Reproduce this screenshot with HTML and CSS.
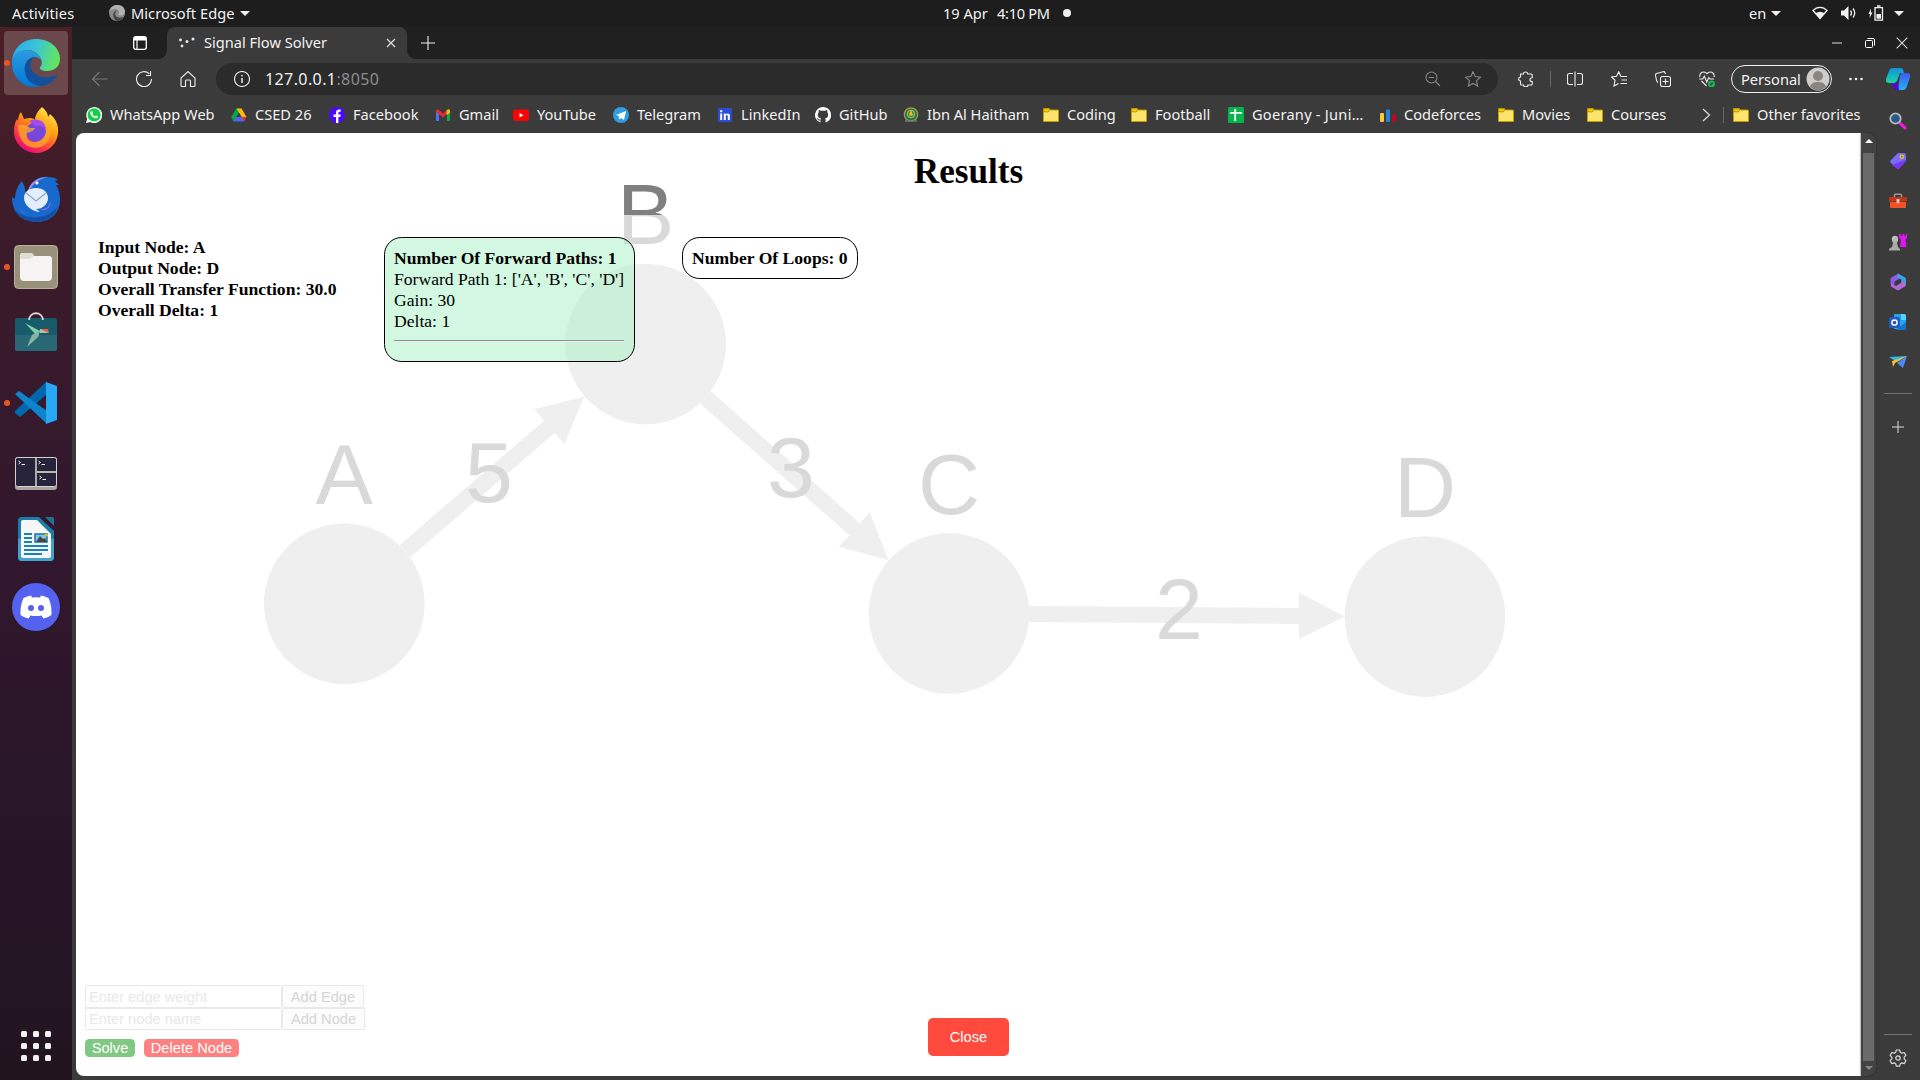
FILE: index.html
```html
<!DOCTYPE html>
<html lang="en">
<head>
<meta charset="utf-8">
<title>Signal Flow Solver</title>
<link rel="stylesheet" href="styles.css">
</head>
<body>
<header class="topbar">
  <span class="activities">Activities</span>
  <svg class="mini-edge" width="16" height="16" viewBox="0 0 48 48"><circle cx="24" cy="24" r="24" fill="#8a8a8a"/><path d="M0 24C2 8 14 0 26 0c14 0 22 10 22 20 0 8-8 13-17 11-4-1-3-4-1-6 2-8-5-13-13-13C8 12 2 18 0 24z" fill="#b0b0b0"/><path d="M13 34c-2-12 6-18 12-16-8 2-9 12-2 17 6 4 14 4 21 0-4 8-12 13-20 13-6-2-10-7-11-14z" fill="#444"/></svg>
  <span class="appname">Microsoft Edge</span>
  <i class="caret"></i>
  <span class="date">19 Apr</span><span class="time">4:10 PM</span><i class="notif"></i>
  <span class="lang">en</span><i class="caret"></i>
  <svg class="wifi" width="16" height="14" viewBox="0 0 16 14"><path d="M1 4.5C5 .2 11 .2 15 4.5L8 12.5z" fill="none" stroke="#f2f2f2" stroke-width="1.3"/><path d="M3.5 7.3c3-2 6-2 9 0L8 12.8z" fill="#f2f2f2"/></svg>
  <svg class="volume" width="16" height="14" viewBox="0 0 16 14"><path d="M0 4.5h3L7.5 0v14L3 9.500H0z" fill="#f2f2f2"/><path d="M9.500 4.500q2 2.500 0 5M12 2.500q3.500 4.500 0 9" fill="none" stroke="#f2f2f2" stroke-width="1.300"/></svg>
  <svg class="battery" width="16" height="16" viewBox="0 0 16 16"><path d="M3 3.500L.5 9H2l-.5 4L4.500 7.500H3z" fill="#f2f2f2"/><path d="M7 2.700h7.500v12.500H7zM9 1h3.500" fill="none" stroke="#f2f2f2" stroke-width="1.300"/><path d="M8.500 9h4.500v4.700H8.500z" fill="#f2f2f2"/></svg>
  <i class="caret sys-caret"></i>
</header>
<div class="desktop">
<nav class="dock">
  <div class="app active running"><svg viewBox="0 0 48 48"><defs><linearGradient id="eg" x1="0" x2="1" y1=".1" y2=".3"><stop offset="0" stop-color="#27a9e8"/><stop offset=".5" stop-color="#3ac4d8"/><stop offset="1" stop-color="#62e560"/></linearGradient><linearGradient id="eb" x1="0" x2="0" y1="0" y2="1"><stop offset="0" stop-color="#2b9ce0"/><stop offset="1" stop-color="#0078d7"/></linearGradient></defs><path d="M0 22C1 9 11 0 24 0c14 0 24 9 24 20 0 8-6 12-13 12-5 0-8-2-7-4 3-2 2-8-1-11C20 7 4 10 0 22z" fill="url(#eg)"/><path d="M0 24c0-8 6-13 14-13 9 0 15 5 16 12-1-3-4-5-7-5-7 0-11 6-9 13 1 8 7 15 15 16C12 51 0 39 0 24z" fill="url(#eb)"/><path d="M13 33c-2-8 3-14 10-15-5 3-6 10-2 15 5 6 14 7 23 3 2-1 1 1 0 2-4 6-10 9-16 9-8-1-14-6-15-14z" fill="#12509c"/></svg></div>
  <div class="app"><svg viewBox="0 0 48 48"><defs><linearGradient id="ff" x1=".8" x2=".2" y1="0" y2="1"><stop offset="0" stop-color="#fff04a"/><stop offset=".4" stop-color="#ff980e"/><stop offset=".7" stop-color="#ff3b45"/><stop offset="1" stop-color="#e2007f"/></linearGradient></defs><path d="M30 0c4 3 6 7 6 10l2-3c6 5 9 12 8 19C45 38 35 46 24 46S2 37 2 25c0-6 1-10 3-13l1 2c0-3 1-7 3-9l3 7 5-1c2 0 4 0 6 2 0-5 3-9 7-13z" fill="url(#ff)"/><circle cx="24" cy="25" r="10" fill="#7747dc"/><path d="M17 14c8-4 17 0 17 8-3-3-6-4-10-3z" fill="#a54ce8"/><path d="M6 18c6-1 8 0 12 3l5 0c-1 3-5 4-8 5-2 8 6 11 12 8 5-2 8-8 7-14l-5-8c8 4 12 13 8 21-5 9-17 10-24 4C8 33 6 26 6 18z" fill="#ffad25" opacity=".75"/></svg></div>
  <div class="app"><svg viewBox="0 0 48 48"><path d="M17 14C20 5 28 1 36 2c4 0 8 1 10 3l-3 1 4 4-3 0c3 4 4 10 4 15 0 13-10 22-23 22C10 47 0 38 0 22l3 2C3 17 6 10 10 6c2 4 4 8 3 12z" fill="#1869cd"/><path d="M3 35c9 9 31 12 43-4-3 10-11 16-21 16-10 0-18-5-22-12z" fill="#1350a5"/><path d="M16 16c2-9 10-14 20-14-9 2-14 6-19 14z" fill="#9a8cf0"/><circle cx="25" cy="8" r="1.500" fill="#fff"/><path d="M6 20c-2 8 2 16 10 21-7-3-12-12-10-21zm24 14c5 0 7-3 9-8 0 6-4 10-10 9z" fill="#7773e2"/><path d="M12 23c0-6 5-10 12-10s12 4 12 10-5 11-12 11l4 3c-9-1-16-7-16-14z" fill="#e4eefa"/><path d="M14 18l10 8 10-8" fill="none" stroke="#8ea8c8" stroke-width="1.300"/></svg></div>
  <div class="app running"><svg viewBox="0 0 48 48"><rect x="2.500" y="2.500" width="43" height="43" rx="4" fill="#999179" stroke="#b9b09a"/><path d="M8 13q0-3 3-3h8q2 0 3 3h15q3 0 3 3v18q0 4-4 4H12q-4 0-4-4z" fill="#f6f5f3"/><path d="M8 13q0-3 3-3h8q2 0 3 3l-4 3H8z" fill="#e0ddd4"/></svg></div>
  <div class="app"><svg viewBox="0 0 48 48"><rect x="3" y="7" width="42" height="33" rx="2.500" fill="#175b6a"/><path d="M3 24h42v14q0 2-2 2H5q-2 0-2-2z" fill="#276776"/><path d="M13 12l15 8-2 6z" fill="#83ceb0"/><path d="M28 19L26 26 15 36l5-12z" fill="#82b6a0"/><path d="M17 9c1-9 13-9 14 0" fill="none" stroke="#ddd4dd" stroke-width="1.800"/><path d="M28 18l7 0 1 4-8 0z" fill="#a6c8b3"/><path d="M29 18h7l1 4-5-2zM34 19l3 3-1 0z" fill="#f15c3c"/></svg></div>
  <div class="app running"><svg viewBox="0 0 48 48"><path d="M34 3v13L8 38l-5-4v-2z" fill="#0068ae"/><path d="M3 15l4-3 28 20v13z" fill="#0c85ce"/><path d="M34 3l11 4v34l-11 4z" fill="#27a8f2"/></svg></div>
  <div class="app"><svg viewBox="0 0 48 48"><rect x="3" y="10" width="42" height="33" rx="3" fill="#a7a49f"/><rect x="3.500" y="10.500" width="41" height="29" rx="2" fill="#26233a" stroke="#d4d2cc"/><path d="M24 11v28M24 25h20" stroke="#b9b7b2" stroke-width="1.800"/><path d="M6.500 14l2 1.500-2 1.500m3 .5h3.500M26.500 14l2 1.500-2 1.500m3 .5H33M27.500 29l2 1.500-2 1.500m3 .5H34" fill="none" stroke="#eee"/></svg></div>
  <div class="app"><svg viewBox="0 0 48 48"><path d="M10 2h17l15 14v26q0 4-4 4H10q-4 0-4-4V6q0-4 4-4z" fill="#1b7ca8"/><path d="M6 24h36v18q0 4-4 4H10q-4 0-4-4z" fill="#42a2cc"/><path d="M11 5h14l14 14v22q0 2-2 2H11q-2 0-2-2V7q0-2 2-2z" fill="#f6f6f6"/><path d="M33 2h7q2 0 2 2v7z" fill="#226f94"/><path d="M12 19h8m-8 4h8m-8 4h8m-8 4h24m-24 4h24m-24 4h18" stroke="#1782ba" stroke-width="2"/><path d="M23 19h12v8H23z" fill="#83c4e4" stroke="#1574a6" stroke-width="1.500"/><path d="M24 27l4-6 3 3 2-1 2 4z" fill="#444"/><path d="M32 19h4v3z" fill="#f3b70f"/></svg></div>
  <div class="app"><svg viewBox="0 0 48 48"><circle cx="24" cy="24" r="24" fill="#5562ef"/><path d="M19 12.500l1 2q4-.7 8 0l1-2q4 .5 7.500 2.500 3.500 7.500 3 17-4 3-8 3.500l-2-3q-5.500 1.200-11 0l-2 3q-4-.5-8-3.500-.5-9.500 3-17 3.500-2 7.500-2.500z" fill="#fff"/><circle cx="19" cy="25" r="3" fill="#5562ef"/><circle cx="29" cy="25" r="3" fill="#5562ef"/></svg></div>
  <div class="apps-grid"><i></i><i></i><i></i><i></i><i></i><i></i><i></i><i></i><i></i></div>
</nav>
<main class="browser">
  <div class="tabstrip">
    <svg class="tab-actions" width="14" height="14" viewBox="0 0 14 14"><rect x=".7" y=".7" width="12.600" height="12.600" rx="2" fill="none" stroke="#fff" stroke-width="1.300"/><path d="M1 1h12v3.500H1z" fill="#fff"/><path d="M4 4v9" stroke="#fff" stroke-width="1.200"/></svg>
    <div class="tab">
      <svg width="18" height="12" viewBox="0 0 18 12"><g fill="#e8e8e8"><circle cx="2.500" cy="3" r="1.400"/><circle cx="4" cy="9" r="1.400"/><circle cx="9" cy="4.500" r="1.500"/><circle cx="15" cy="2" r="1.500"/></g></svg>
      <span class="tab-title">Signal Flow Solver</span>
      <svg class="tab-close" width="10" height="10" viewBox="0 0 10 10"><path d="M1 1l8 8M9 1L1 9" stroke="#ddd" stroke-width="1.200"/></svg>
    </div>
    <svg class="newtab" width="14" height="14" viewBox="0 0 14 14"><path d="M7 0v14M0 7h14" stroke="#eee" stroke-width="1.100"/></svg>
    <div class="winctl">
      <svg width="12" height="12" viewBox="0 0 12 12"><path d="M1 6h10" stroke="#8b8b8b" stroke-width="1.800"/></svg>
      <svg width="12" height="12" viewBox="0 0 12 12"><rect x="1.500" y="3.500" width="7" height="7" rx="1" fill="none" stroke="#fff"/><path d="M3.500 1.500H9q1.500 0 1.500 1.500v5.500" fill="none" stroke="#fff"/></svg>
      <svg width="12" height="12" viewBox="0 0 12 12"><path d="M.7.7l10.600 10.600M11.300.7L.7 11.300" stroke="#ddd" stroke-width="1.100"/></svg>
    </div>
  </div>
  <div class="toolbar">
    <div class="tb"><svg viewBox="0 0 16 16"><path d="M15.500 8H.8M7.500 1L.6 8l6.900 7" stroke="#777"/></svg></div>
    <div class="tb"><svg viewBox="0 0 16 16"><path d="M13.300 2.800A7.500 7.500 0 1 0 15.500 8M14.500 0v4.500H10"/></svg></div>
    <div class="tb"><svg viewBox="0 0 16 16"><path d="M1 7l7-6.400L15 7v7.500q0 1-1 1h-3.500V10q0-1-1-1h-3q-1 0-1 1v5.500H2q-1 0-1-1z"/></svg></div>
    <div class="address">
      <svg class="ic" viewBox="0 0 16 16"><circle cx="8" cy="8" r="7.500"/><path d="M8 7v5" stroke-width="1.500"/><circle cx="8" cy="4.700" r=".9" fill="#ddd" stroke="none"/></svg>
      <span class="url">127.0.0.1<b>:8050</b></span>
      <svg class="ic dim zoomout" viewBox="0 0 16 16"><circle cx="6.500" cy="6.500" r="5.500"/><path d="M10.500 10.500L15 15M4 6.500h5"/></svg>
      <svg class="ic dim" viewBox="0 0 16 16"><path d="M8 .8l2.200 4.800 5.200.6-3.900 3.500 1.100 5.400L8 12.500l-4.600 2.600 1.100-5.400L.6 6.200l5.200-.6z"/></svg>
    </div>
    <div class="tb puzzle"><svg viewBox="0 0 16 16"><path d="M2.500 3H5.500C5.500 .3 9.700 .3 9.700 3h3.500q1 0 1 1v2.700c-3 0-3 3.900 0 3.900V13q0 1-1 1H10c0 2.500-4.500 2.500-4.500 0H3.500q-1 0-1-1v-3C0 10 0 6 2.500 6z"/></svg></div>
    <i class="vsep"></i>
    <div class="tb"><svg viewBox="0 0 16 16"><path d="M8 .5v15M6 2.500H2.500q-2 0-2 2v7q0 2 2 2H6M10 2.500h3.500q2 0 2 2v7q0 2-2 2H10"/></svg></div>
    <div class="tb"><svg viewBox="0 0 16 16"><path d="M9.500 5.500L9.800 5.300 7.800.8 5.500 5.200.5 6l3.500 3.300-1 5.700 4.500-2.500M9.500 5.500h6.500M10.500 9H16M9.500 12.500H16"/></svg></div>
    <div class="tb"><svg viewBox="0 0 16 16"><rect x="5.500" y="5.500" width="10" height="10" rx="2"/><path d="M10.500 7.500v6M7.500 10.500h6M3 11.500Q2 11 1.500 9L.5 4.500Q.3 3 1.700 2.500L8 .7q1.500-.3 2 1L10.500 3"/></svg></div>
    <div class="tb"><svg viewBox="0 0 16 16"><path d="M.8 6C0 1.500 5.500-.8 8 2.800 10.500-.8 16 1.500 15.200 6M2.500 10l5 5M.3 8h3.500l1.500-3 2.500 6 2-4.500 1.200 1.500H15"/><circle cx="12.500" cy="13" r="3.500" fill="#16b84e" stroke="none"/><path d="M11.300 14l2.400-2.200" stroke="#222"/></svg></div>
    <div class="profile"><span>Personal</span><svg width="24" height="24" viewBox="0 0 24 24"><circle cx="12" cy="12" r="11.500" fill="#d0ccc9"/><circle cx="12" cy="9" r="5" fill="#8a8582"/><path d="M4 20q1-5 8-5t8 5q-8 7-16 0z" fill="#8a8582"/></svg></div>
    <div class="tb menu"><svg viewBox="0 0 16 16"><g fill="#eee" stroke="none"><circle cx="2.500" cy="8" r="1.300"/><circle cx="8" cy="8" r="1.300"/><circle cx="13.500" cy="8" r="1.300"/></g></svg></div>
    <svg class="copilot" width="24" height="24" viewBox="0 0 24 24"><defs><linearGradient id="c1" x1="0" x2="0" y1="0" y2="1"><stop offset="0" stop-color="#1391dc"/><stop offset="1" stop-color="#18d5a5"/></linearGradient><linearGradient id="c2" x1="0" x2="0" y1="0" y2="1"><stop offset="0" stop-color="#4058ef"/><stop offset="1" stop-color="#22b3f5"/></linearGradient></defs><path d="M6 1h9q2 0 2.500 3l.5 2h-4L11 14q-1 2-3 2H3Q-1 16 0 12L3 4q1-3 3-3z" fill="url(#c1)"/><path d="M15 6h6q4 0 3 4l-3 9q-1 4-4 4h-5l2-14z" fill="url(#c2)"/><path d="M11 14l2 9h-3q-2 0-3-4l-1-3h3q1 0 2-2z" fill="#5008d8"/></svg>
  </div>
  <div class="bookmarks">
    <a><svg viewBox="0 0 16 16"><path d="M0 16l1.200-4.200A8 8 0 1 1 4.300 15z" fill="#fff"/><circle cx="8.100" cy="7.900" r="6.600" fill="#12cf48"/><path d="M5 4.200q1-.8 1.600.7l.4 1q0 .5-.7 1.100 1 1.900 2.800 2.500l.9-1q.3-.3 1.900.8.300 2-2 2-4-.5-5.600-4.500Q4.200 5 5 4.200z" fill="#fff"/></svg><span>WhatsApp Web</span></a>
    <a><svg viewBox="0 0 16 16"><path d="M5.300 1.500h5L5 10.500l-2.600 4L.3 10z" fill="#00a84b"/><path d="M5.500 1.500h5l5 8.500h-5z" fill="#ffb900"/><path d="M5 10h10.300l-2.500 4.500H2.400z" fill="#4b66f5"/><path d="M11 10h4.500l-2.600 4.500z" fill="#f02f2d"/><path d="M8 6l2.500 4H5.500z" fill="#3b3b3b"/></svg><span>CSED 26</span></a>
    <a><svg viewBox="0 0 16 16"><circle cx="8" cy="8" r="8" fill="#4a08ff"/><path d="M7 16v-6H4.500V7.500H7V5.700Q7 2.500 10.200 2.500h1.500v2.300h-1.300q-1 0-1 1v1.700h2.300L11.300 10H9.400v6z" fill="#fff"/></svg><span>Facebook</span></a>
    <a><svg viewBox="0 0 16 16"><path d="M1 4h3v10H2q-1 0-1-1z" fill="#4c72f5"/><path d="M12 4h3v9q0 1-1 1h-2z" fill="#14a84c"/><path d="M1 3.500q2-2 3.500 0L8 6.500l3.500-3V7.500L8 10.300 1 5z" fill="#e52a34"/><path d="M11.500 3.500q2.500-2.500 3.500 0V6l-3.500 2z" fill="#fabc08"/></svg><span>Gmail</span></a>
    <a><svg viewBox="0 0 16 16"><rect y="2.500" width="16" height="11.500" rx="3" fill="#f00"/><path d="M6.500 6v4.500l4-2.250z" fill="#fff"/></svg><span>YouTube</span></a>
    <a><svg viewBox="0 0 16 16"><circle cx="8" cy="8" r="8" fill="#2d9fe2"/><path d="M3 8l10-4-2 9-3-2-2 1.500L5.800 9z" fill="#fff"/></svg><span>Telegram</span></a>
    <a><svg viewBox="0 0 16 16"><rect x="1" y="1" width="14" height="14" rx="1" fill="#2d4dd1"/><path d="M3.200 6.500h2V13h-2zM3.200 3.200h2v2h-2zM6.800 6.500h1.900v1q2.500-2.300 4.100.3V13h-2V9q-1-2-2 0v4h-2z" fill="#fff"/></svg><span>LinkedIn</span></a>
    <a><svg viewBox="0 0 16 16"><path d="M8 0a8 8 0 0 0-2.500 15.600V13.500Q3 14 2.500 12.200L1.500 11q2 0 2.500 1.500l1.500.2.600-1.300Q2.800 11 2.800 7.500L3.700 5.300 3.800 3Q5 3 6 3.800h4q1.200-.8 2.200-.8l.2 2.300.8 2.200q0 3.500-3.200 3.900l.6 1.200v3A8 8 0 0 0 8 0z" fill="#fff"/></svg><span>GitHub</span></a>
    <a><svg viewBox="0 0 16 16"><circle cx="8" cy="7.500" r="6.700" fill="#187b50" stroke="#bd9140" stroke-width="1.200"/><circle cx="8" cy="7" r="3.800" fill="#4a8b3b" stroke="#ddd288" stroke-width=".7"/><path d="M8 2.500l2 6H6z" fill="#fbc012"/><path d="M2 12q6 4 12 0v3H2z" fill="#666"/></svg><span>Ibn Al Haitham</span></a>
    <a><svg viewBox="0 0 16 16"><path d="M.5 14.500v-12q0-1 1-1H6l1.500 1.500h7q1 0 1 1v10.500z" fill="#fde46c" stroke="#c19b00"/><path d="M.5 4.500V1.700h5.800V4L5 5z" fill="#f5d400" stroke="#b98f00"/></svg><span>Coding</span></a>
    <a><svg viewBox="0 0 16 16"><path d="M.5 14.500v-12q0-1 1-1H6l1.500 1.500h7q1 0 1 1v10.500z" fill="#fde46c" stroke="#c19b00"/><path d="M.5 4.500V1.700h5.800V4L5 5z" fill="#f5d400" stroke="#b98f00"/></svg><span>Football</span></a>
    <a class="sheet"><svg viewBox="0 0 16 16"><rect width="16" height="16" rx="1.500" fill="#06b44d"/><path d="M7.200 2v12M2 5.800h12" stroke="#fff" stroke-width="1.800"/></svg><span>Goerany - Juni…</span></a>
    <a><svg viewBox="0 0 16 16"><rect y="6" width="4" height="9" rx="1" fill="#f4cd38"/><rect x="6" y="2.500" width="4" height="12.500" rx="1" fill="#2484d4"/><rect x="12" y="7.500" width="4" height="7.500" rx="1" fill="#c00522"/></svg><span>Codeforces</span></a>
    <a><svg viewBox="0 0 16 16"><path d="M.5 14.500v-12q0-1 1-1H6l1.500 1.500h7q1 0 1 1v10.500z" fill="#fde46c" stroke="#c19b00"/><path d="M.5 4.500V1.700h5.800V4L5 5z" fill="#f5d400" stroke="#b98f00"/></svg><span>Movies</span></a>
    <a><svg viewBox="0 0 16 16"><path d="M.5 14.500v-12q0-1 1-1H6l1.500 1.500h7q1 0 1 1v10.500z" fill="#fde46c" stroke="#c19b00"/><path d="M.5 4.500V1.700h5.800V4L5 5z" fill="#f5d400" stroke="#b98f00"/></svg><span>Courses</span></a>
    <span class="more"><svg viewBox="0 0 16 16"><path d="M1 2l6.500 6L1 14" fill="none" stroke="#ddd" stroke-width="1.200"/></svg></span>
    <a><svg viewBox="0 0 16 16"><path d="M.5 14.500v-12q0-1 1-1H6l1.500 1.500h7q1 0 1 1v10.500z" fill="#fde46c" stroke="#c19b00"/><path d="M.5 4.500V1.700h5.800V4L5 5z" fill="#f5d400" stroke="#b98f00"/></svg><span>Other favorites</span></a>
  </div>
  <div class="content">
    <section class="page">
      <svg class="graph" width="1785" height="943" viewBox="76 133 1785 943">
        <g fill="#efefef">
          <path d="M399.800 544.700L544 420.700 534.300 409.300 584.300 396.500 564.300 444.300 554.600 433 410.400 557.300z"/>
          <path d="M710.900 391.300L860 523.300 869.600 512.300 888.500 560 838.900 546.700 849.400 535.300 700.300 403.700z"/>
          <path d="M1028 606L1299 608V592.700L1345 616.500 1299 639V624L1028 622z"/>
          <circle cx="344.300" cy="603.700" r="80.300"/><circle cx="645.700" cy="344" r="80.300"/><circle cx="949" cy="613.400" r="80.300"/><circle cx="1425" cy="616.600" r="80.300"/>
        </g>
        <defs><linearGradient id="bfade" gradientUnits="userSpaceOnUse" x1="0" x2="0" y1="214" y2="216"><stop offset=".5" stop-color="#808080"/><stop offset=".5" stop-color="#d9d9d9"/></linearGradient></defs>
        <g class="labels">
          <text x="344.300" y="504">A</text><text x="645.700" y="244" fill="url(#bfade)">B</text><text x="949" y="513.500">C</text><text x="1425" y="517">D</text>
          <text x="489" y="502">5</text><text x="791" y="496.500">3</text><text x="1179" y="638.700">2</text>
        </g>
      </svg>
      <div class="controls">
        <div class="line"><span class="field">Enter edge weight</span><span class="btn">Add Edge</span></div>
        <div class="line second"><span class="field">Enter node name</span><span class="btn wide">Add Node</span></div>
        <div class="actions"><span class="solve">Solve</span><span class="delete">Delete Node</span></div>
      </div>
      <div class="overlay">
        <h1>Results</h1>
        <div class="panels">
          <div class="summary"><p>Input Node: A</p><p>Output Node: D</p><p>Overall Transfer Function: 30.0</p><p>Overall Delta: 1</p></div>
          <div class="card paths"><p class="strong">Number Of Forward Paths: 1</p><p>Forward Path 1: ['A', 'B', 'C', 'D']</p><p>Gain: 30</p><p>Delta: 1</p><hr></div>
          <div class="card loops"><p class="strong">Number Of Loops: 0</p></div>
        </div>
        <span class="close">Close</span>
      </div>
    </section>
    <div class="scrollbar"><i class="up"></i><div class="thumb"></div><i class="down"></i></div>
    <aside class="sidebar">
      <svg viewBox="0 0 18 18"><path d="M11 11l5 5" stroke="#f218ee" stroke-width="3" stroke-linecap="round"/><circle cx="6.500" cy="6.500" r="5.200" fill="#275b86" stroke="#b9b9b9" stroke-width="1.800"/></svg>
      <svg viewBox="0 0 18 18"><path d="M9 1h6q2 0 2 2v6l-7 7.500q-1 1-2 0l-6.500-6q-1-1 0-2z" fill="#7a6bf8"/><path d="M3 13l5-2 8-3 1 1-7 7.500q-1 1-2 0z" fill="#7a35f5"/><circle cx="12.800" cy="4.800" r="1.700" fill="none" stroke="#dfc80e" stroke-width="1.400"/></svg>
      <svg viewBox="0 0 18 18"><path d="M5.500 5V3.300q0-1 1-1h5q1 0 1 1V5" fill="none" stroke="#999" stroke-width="1.500"/><rect x="0" y="5" width="18" height="4.500" rx="1" fill="#c93512"/><path d="M1 10h16v5q0 1-1 1H2q-1 0-1-1z" fill="#f25026"/><path d="M7.500 7h3v3.500q-1.500 2-3 0z" fill="#ccc"/></svg>
      <svg viewBox="0 0 18 18"><path d="M10 1h2v2h1.500V1h2v2H17V1h1v4l-1.500 1 1 8H11l1-8-2-1z" fill="#e414f0"/><circle cx="6" cy="6" r="3.200" fill="#bbb"/><path d="M3 8h6l-1 2 1 4 2 2v1.500H0V16l3-2 1-4z" fill="#aaa"/></svg>
      <svg viewBox="0 0 18 18"><path d="M5 3l5-2.700V6L5.500 8.500v5L1.500 11V5.500Q2 4.500 5 3z" fill="#8d5be5"/><path d="M9 .5l7 4q1 1 1 2V12l-4.500-2.500V6.500L8 4.500z" fill="#35a5e8"/><path d="M17 11q0 2-1 2.500L10 17q-1 .5-2 0l-6-3.500L2 11l5 2 5-3V8l5 3z" fill="#b467d7"/></svg>
      <svg viewBox="0 0 18 18"><path d="M5 1h10q2 0 2 2v13H5z" fill="#24a4ea"/><path d="M7 17l10-8v7q0 1-1 1z" fill="#1474ca"/><path d="M12 1h3q2 0 2 2v4h-5z" fill="#55d0ff"/><rect x="0" y="4" width="11" height="11" rx="1.500" fill="#2159c8"/><circle cx="5.500" cy="9.500" r="2.600" fill="none" stroke="#fff" stroke-width="1.500"/></svg>
      <svg viewBox="0 0 18 18"><path d="M0 4l18-1-10 6z" fill="#31b8ef"/><path d="M3 8l15-5-12 7-2 4z" fill="#f7c22d"/><path d="M8 10l10-7-4 12z" fill="#5288f0"/></svg>
      <hr>
      <svg class="plus" viewBox="0 0 18 18"><path d="M9 3v12M3 9h12" stroke="#ddd" stroke-width="1"/></svg>
      <hr class="bottom">
      <svg class="gear" viewBox="0 0 18 18"><g fill="none" stroke="#d8d8d8" stroke-width="1.200"><path d="M7.300 1h3.400l.6 2.400 1.500.8 2.400-.7 1.700 2.900-1.700 1.800v1.700l1.700 1.800-1.700 2.900-2.400-.7-1.500.8-.6 2.400H7.300l-.6-2.400-1.500-.8-2.400.7-1.700-2.900 1.700-1.800V8.200L1.100 6.400l1.700-2.900 2.400.7 1.500-.8z" stroke-linejoin="round"/><circle cx="9" cy="9" r="2.200"/></g></svg>
    </aside>
  </div>
</main>
</div>
</body>
</html>
```
FILE: styles.css
```css
* { box-sizing: border-box; }
body { margin: 0; width: 1920px; height: 1080px; overflow: hidden; display: flex; flex-direction: column; background: #3b3b3b; color: #f2f2f2; font: 14.6px "Noto Sans", sans-serif; }
svg { display: block; flex: none; }
.topbar { height: 27px; background: #1d1d1d; display: flex; align-items: center; flex: none; line-height: 25px; padding-bottom: 1px; white-space: nowrap; }
.activities { width: 97px; padding-left: 12px; letter-spacing: .15px; }
.mini-edge { margin: 0 6px 1px 12px; }
.appname { width: 109px; letter-spacing: .05px; }
.caret { width: 0; height: 0; border: 5px solid transparent; border-top-color: #f2f2f2; border-bottom: 0; }
.date { margin-left: 693px; width: 54px; }
.time { width: 66px; letter-spacing: -.3px; }
.notif { width: 8px; height: 8px; border-radius: 50%; background: #f2f2f2; }
.lang { margin-left: 678px; width: 22px; }
.wifi { margin-left: 31px; }
.volume { margin-left: 13px; }
.battery { margin: 0 0 1px 11px; }
.sys-caret { margin-left: 10px; }
.desktop { flex: 1; display: flex; min-height: 0; }
.dock { width: 72px; flex: none; padding: 4px 4px 19px; display: flex; flex-direction: column; gap: 4px; background: linear-gradient(#4a1f26, #3a1b2b 22%, #31172d 50%, #251526 85%, #21141e); }
.app { height: 64px; border-radius: 4px; display: grid; place-items: center; position: relative; }
.app svg { width: 48px; height: 48px; }
.app.active { background: #6b484c; }
.app.running::before { content: ""; position: absolute; left: 0; top: 29px; width: 6px; height: 6px; border-radius: 50%; background: #e95420; }
.apps-grid { margin: auto auto 0; display: grid; grid-template-columns: repeat(3, 6px); gap: 6px; }
.apps-grid i { height: 6px; border-radius: 1.5px; background: #f2f0f1; }
.browser { flex: 1; min-width: 0; display: flex; flex-direction: column; background: #3b3b3b; }
.tabstrip { height: 32px; background: #202020; display: flex; align-items: center; flex: none; }
.tab-actions { margin-left: 61px; }
.tab { margin-left: 20px; width: 240px; height: 32px; background: #3b3b3b; border-radius: 8px 8px 0 0; display: flex; align-items: center; padding: 0 11px; position: relative; }
.tab::before, .tab::after { content: ""; position: absolute; bottom: 0; width: 8px; height: 8px; }
.tab::before { left: -8px; background: radial-gradient(circle at 0 0, #202020 7.5px, #3b3b3b 8px); }
.tab::after { right: -8px; background: radial-gradient(circle at 100% 0, #202020 7.5px, #3b3b3b 8px); }
.tab-title { margin-left: 8px; padding-bottom: 2px; white-space: nowrap; }
.tab-close { margin-left: auto; }
.newtab { margin-left: 14px; }
.winctl { margin-left: auto; padding-right: 12px; display: flex; gap: 20.500px; }
.toolbar { height: 42px; padding: 0 10px 2px 6px; display: flex; align-items: center; flex: none; }
.tb { width: 44px; display: grid; place-items: center; flex: none; }
.tb svg, .ic { width: 16px; height: 16px; fill: none; stroke: #eee; stroke-width: 1.1; }
.puzzle { width: 40px; margin-left: 8px; }
.vsep { width: 1px; height: 16px; background: #666; margin: 0 2px 0 4px; flex: none; }
.address { width: 1282px; height: 32px; margin-left: 6px; border-radius: 16px; background: #2b2b2b; display: flex; align-items: center; padding: 0 17px 0 18px; flex: none; }
.url { margin-left: 15px; font-size: 16px; letter-spacing: .4px; }
.url b { font-weight: 400; color: #8c8c8c; }
.ic.dim { stroke: #888; }
.zoomout { margin: 0 24px 0 auto; }
.profile { margin-left: 2px; width: 101px; height: 28px; border: 1.500px solid #f0f0f0; border-radius: 14px; display: flex; align-items: center; justify-content: space-between; padding: 0 1px 0 9px; flex: none; }
.menu { margin-left: 2px; }
.copilot { margin-left: 8px; }
.bookmarks { flex: none; height: 32px; padding: 0 0 4px 14px; display: grid; align-items: center; grid-template-columns: 145px 98px 106px 78px 100px 104px 98px 88px 140px 88px 97px 152px 118px 89px 115px 31px 140px; white-space: nowrap; }
.bookmarks a { display: flex; gap: 8px; align-items: center; }
.bookmarks a span { padding-bottom: 2px; }
.bookmarks .sheet { letter-spacing: .25px; }
.bookmarks a svg, .more svg { width: 16px; height: 16px; }
.more { border-right: 1px solid #666; width: 22px; }
.content { flex: 1; min-height: 0; display: flex; padding: 0 0 4px 4px; }
.page { width: 1785px; height: 943px; background: #fff; color: #000; border-radius: 8px 0 0 8px; display: grid; font: 17.600px/21px "Liberation Serif", serif; overflow: hidden; }
.graph, .overlay, .controls { grid-area: 1 / 1; }
.labels { font: 86px "Liberation Sans", sans-serif; fill: #d9d9d9; text-anchor: middle; }
.controls { align-self: end; padding: 0 0 19px 9px; font: 14.667px/16px "Liberation Sans", sans-serif; }
.line { display: flex; height: 23px; }
.line.second { height: 22px; }
.field { width: 197px; border: 1px solid #e9e9e9; border-radius: 1.500px; color: #e8e8e8; padding: 3px 3px 0; }
.btn { width: 82px; border: 1px solid #e9e9e9; border-radius: 2px; background: #fcfcfc; color: #d5d5d5; text-align: center; padding-top: 3px; }
.btn.wide { width: 83px; }
.second span { padding-top: 2px; }
.actions { display: flex; gap: 9px; margin-top: 9px; color: #fff; text-align: center; line-height: 18px; }
.solve { width: 50px; border-radius: 4.400px; background: #80c883; }
.delete { width: 95px; border-radius: 4.400px; background: #ff8080; }
.overlay { display: flex; flex-direction: column; align-items: center; padding: 18px 22px 20px; z-index: 1; }
h1 { margin: 0; font-size: 35.200px; line-height: 41px; }
p { margin: 0; white-space: nowrap; }
.panels { align-self: stretch; margin-top: 45px; display: flex; align-items: flex-start; }
.summary { width: 286px; font-weight: 700; }
.card { border: 1px solid #000; border-radius: 17.600px; padding: 10px 10px 10px 9px; }
.strong { font-weight: 700; }
.paths { width: 251px; height: 125px; background: rgba(167, 241, 197, .5); }
.paths hr { margin: 8px 0; height: 2px; border: 0; border-top: 1px solid #998f98; border-bottom: 1px solid #e6efe9; }
.loops { margin-left: 47px; width: 176px; height: 42px; }
.close { margin-top: auto; width: 81px; height: 38px; border-radius: 5px; background: #ff4a3d; color: #fff; text-align: center; font: 14.667px/38px "Liberation Sans", sans-serif; }
.scrollbar { width: 15px; background: #424242; border-radius: 0 9px 9px 0; display: flex; flex-direction: column; align-items: center; box-shadow: 0 0 2px #292929; }
.scrollbar i { width: 0; height: 0; border: 4px solid transparent; }
.scrollbar .up { margin-top: 6px; border-top: 0; border-bottom-color: #fff; }
.scrollbar .down { margin: 5px 0 6px; border-bottom: 0; border-top-color: #888; }
.thumb { width: 11px; margin-top: 10px; flex: 1; background: #6a6a6a; }
.sidebar { flex: 1; display: flex; flex-direction: column; align-items: center; gap: 22.200px; margin-top: -21px; }
.sidebar svg { width: 18px; height: 18px; }
.sidebar hr { width: 28px; height: 1px; border: 0; background: #727272; margin: 0; }
.sidebar .plus { margin-top: 1px; }
.sidebar .bottom { margin-top: auto; }
.sidebar .gear { margin: -8px 0 9px; }
```
